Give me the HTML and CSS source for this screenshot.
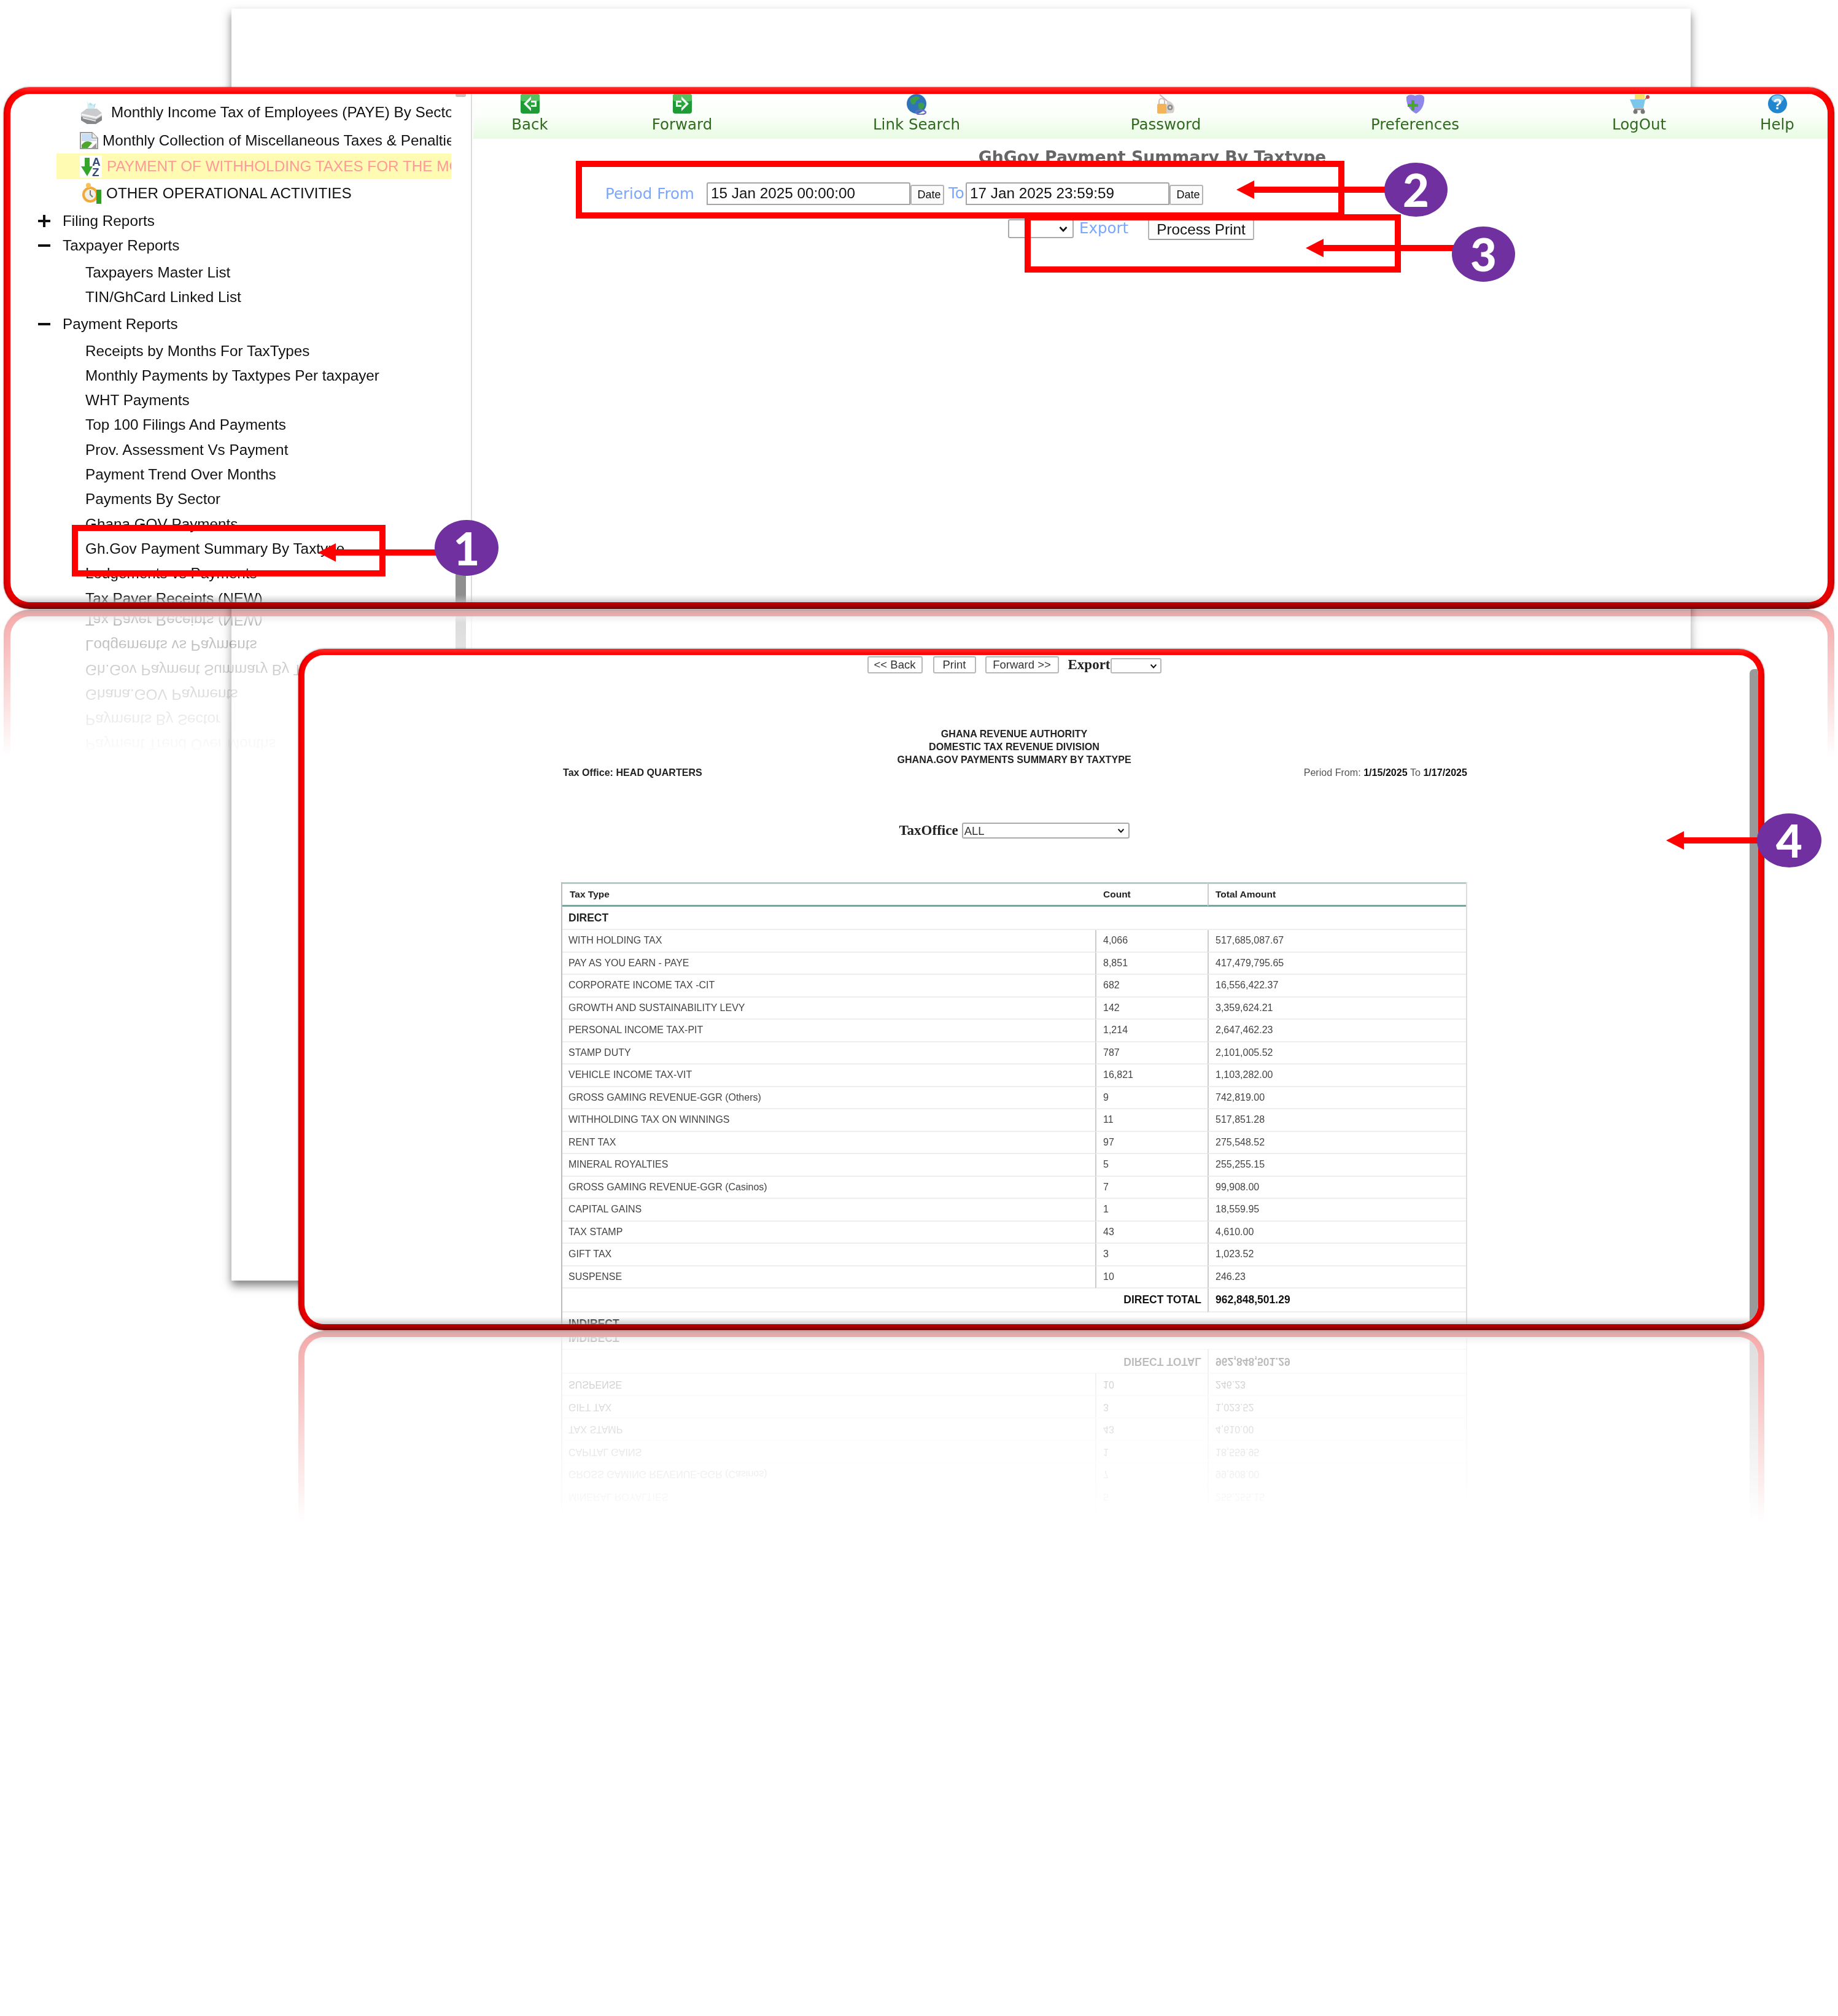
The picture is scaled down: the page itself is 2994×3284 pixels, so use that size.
FILE: index.html
```html
<!DOCTYPE html>
<html lang="en">
<head>
<meta charset="utf-8">
<title>Gh.Gov Payment Summary By Taxtype</title>
<link rel="stylesheet" href="styles.css">
</head>
<body>
<div class="stage">
  <div class="back-page"></div>

  <section class="frame frame-top">
    <div class="frame-inner app">
      <aside class="sidebar">
        <div class="tree">
          <div class="leaf leaf-a"><svg class="ic ic-printer" viewBox="0 0 38 40"><path d="M11 1l4 11 9 1 2-8-4 3-5-4-3 3z" fill="#b5dfec"/><path d="M13 16l-1-13 5 6 5-1 3 9z" fill="#d2edf4"/><path d="M2 21l9-7h17l8 7v12l-10 6H12L2 33z" fill="#c9cbcd"/><path d="M3 22l24 5 9-6v3l-9 6L3 25z" fill="#f4f4f4"/><path d="M2 27l24 5 10-6v7l-10 6H12L2 33z" fill="#85888b"/><path d="M5 29l21 5" stroke="#e8e8e8" stroke-width="2"/></svg><span class="leaf-t t-a">Monthly Income Tax of Employees (PAYE) By Sector</span></div>
          <div class="leaf leaf-b"><svg class="ic ic-doc" viewBox="0 0 30 28"><path d="M1 1h19l9 9v17H1z" fill="#fff" stroke="#9a9a9a" stroke-width="2"/><path d="M20 1v9h9" fill="#eee" stroke="#9a9a9a" stroke-width="1.5"/><path d="M3 3h16v9h8v3H3z" fill="#c9def5"/><path d="M3 26v-5c5-7 12-7 17-3l-7 8z" fill="#4fa52e"/><path d="M19 26l8-8v8z" fill="#9a9a9a"/></svg><span class="leaf-t t-b">Monthly Collection of Miscellaneous Taxes &amp; Penalties</span></div>
          <div class="leaf leaf-c"><svg class="ic ic-sort" viewBox="0 0 36 36"><rect width="36" height="36" fill="#fff"/><path d="M8 4h8v14h5L12 34 2 18h6z" fill="#35a52d"/><text x="20" y="17" class="ic-txt ic-a">A</text><text x="20" y="34" class="ic-txt ic-a">Z</text></svg><span class="leaf-t t-c">PAYMENT OF WITHHOLDING TAXES FOR THE MONTH</span></div>
          <div class="leaf leaf-d"><svg class="ic ic-clock" viewBox="0 0 33 35"><circle cx="14" cy="20" r="13" fill="#f2a93a"/><circle cx="14" cy="20" r="9" fill="#efefe8"/><path d="M14 13v7l4 4" stroke="#777" stroke-width="2" fill="none"/><circle cx="11" cy="5" r="4" fill="#f6c15a"/><path d="M24 12h8v23h-8z" fill="#2f9f26"/></svg><span class="leaf-t t-d">OTHER OPERATIONAL ACTIVITIES</span></div>
          <div class="node node-first"><span class="plus"></span>Filing Reports</div>
          <div class="node"><span class="minus"></span>Taxpayer Reports</div>
          <div class="sub-list">
            <div class="sub">Taxpayers Master List</div>
            <div class="sub">TIN/GhCard Linked List</div>
          </div>
          <div class="node"><span class="minus"></span>Payment Reports</div>
          <div class="sub-list">
            <div class="sub">Receipts by Months For TaxTypes</div>
            <div class="sub">Monthly Payments by Taxtypes Per taxpayer</div>
            <div class="sub">WHT Payments</div>
            <div class="sub">Top 100 Filings And Payments</div>
            <div class="sub">Prov. Assessment Vs Payment</div>
            <div class="sub">Payment Trend Over Months</div>
            <div class="sub">Payments By Sector</div>
            <div class="sub">Ghana.GOV Payments</div>
            <div class="sub">Gh.Gov Payment Summary By Taxtype</div>
            <div class="sub">Lodgements vs Payments</div>
            <div class="sub">Tax Payer Receipts (NEW)</div>
          </div>
        </div>
        <div class="side-cap"></div>
        <div class="side-thumb"></div>
      </aside>
      <main class="workspace">
        <nav class="toolbar">
          <div class="tool"><svg class="tool-ic" viewBox="0 0 33 33"><rect x="1" y="0" width="31" height="32" rx="4" fill="#1f9a36"/><rect x="1" y="0" width="31" height="12" rx="4" fill="#55c060"/><path d="M18 4L6 16l12 12v-7h9v-10h-9z" fill="#fff" opacity=".92"/><path d="M18 9l-7 7 7 7v-5h6v-4h-6z" fill="#2aa53c"/></svg><span>Back</span></div>
          <div class="tool"><svg class="tool-ic" viewBox="0 0 33 33"><rect x="1" y="0" width="31" height="32" rx="4" fill="#1f9a36"/><rect x="1" y="0" width="31" height="12" rx="4" fill="#55c060"/><path d="M15 4l12 12-12 12v-7H6v-10h9z" fill="#fff" opacity=".92"/><path d="M15 9l7 7-7 7v-5H9v-4h6z" fill="#2aa53c"/></svg><span>Forward</span></div>
          <div class="tool"><svg class="tool-ic tool-wide" viewBox="0 0 36 34"><circle cx="18" cy="16" r="16" fill="#2f74b8"/><path d="M8 8c5-5 12-5 15-2-1 4-5 3-6 7s-5 6-7 3-3-5-2-8zM22 15c4-2 8 0 9 3-1 5-5 8-8 8-2-3-3-8-1-11z" fill="#3f9e4a"/><ellipse cx="25" cy="30" rx="8" ry="3.500" fill="none" stroke="#6a6fc0" stroke-width="2.500"/></svg><span>Link Search</span></div>
          <div class="tool"><svg class="tool-ic" viewBox="0 0 33 33"><path d="M6 1l14 12" stroke="#d9a9b4" stroke-width="2"/><path d="M18 11c10 1 15 12 10 20l-12 1z" fill="#d6d0cb"/><circle cx="23" cy="22" r="4.500" fill="#8b8b8b"/><circle cx="23" cy="22" r="2" fill="#ddd"/><rect x="2" y="16" width="15" height="16" rx="2" fill="#f3b356"/><path d="M5 16v-4a4.500 4.500 0 0 1 9 0v4" fill="none" stroke="#c9c2bc" stroke-width="2"/></svg><span>Password</span></div>
          <div class="tool"><svg class="tool-ic" viewBox="0 0 33 33"><path d="M2 5c4-5 10-4 14-2 5-2 11-3 15 2 1 12-4 22-13 27C8 28 1 17 2 5z" fill="#9087ea"/><path d="M10 10h5v6h6v5h-6v6h-5v-6H4v-5h6z" fill="#4ca52f"/></svg><span>Preferences</span></div>
          <div class="tool"><svg class="tool-ic" viewBox="0 0 33 33"><rect x="9" y="1" width="16" height="10" fill="#f7e36b"/><path d="M1 9h25l-3 14H7z" fill="#7cc6ec"/><path d="M26 9l3-4" stroke="#8a8a8a" stroke-width="2"/><circle cx="30" cy="5" r="3" fill="#c4404a"/><path d="M8 25h16" stroke="#8f8f8f" stroke-width="3"/><circle cx="10" cy="29" r="3.500" fill="#777"/><circle cx="22" cy="29" r="3.500" fill="#777"/></svg><span>LogOut</span></div>
          <div class="tool"><svg class="tool-ic" viewBox="0 0 33 33"><circle cx="16.500" cy="16" r="15.500" fill="#1f86cf"/><ellipse cx="16.500" cy="8" rx="10" ry="6" fill="#7cc8f0"/><text x="16.500" y="25" class="ic-txt ic-q">?</text></svg><span>Help</span></div>
        </nav>
        <h1 class="form-title">GhGov Payment Summary By Taxtype</h1>
        <form class="period-row">
          <label class="period-label">Period From</label>
          <input class="date-input" type="text" value="15 Jan 2025 00:00:00">
          <button class="date-btn" type="button">Date</button>
          <span class="to-label">To</span>
          <input class="date-input" type="text" value="17 Jan 2025 23:59:59">
          <button class="date-btn" type="button">Date</button>
        </form>
        <div class="export-row">
          <select class="export-select"><option></option></select>
          <span class="export-label">Export</span>
          <button class="process-btn" type="button">Process Print</button>
        </div>
      </main>
    </div>
  </section>

  <section class="frame frame-report">
    <div class="frame-inner report-view">
      <div class="report">
        <div class="report-nav">
          <button class="nav-btn btn-back" type="button">&lt;&lt; Back</button>
          <button class="nav-btn btn-print" type="button">Print</button>
          <button class="nav-btn btn-forward" type="button">Forward &gt;&gt;</button>
          <span class="nav-export">Export</span>
          <select class="nav-select"><option></option></select>
        </div>
        <div class="report-head">
          <div>GHANA REVENUE AUTHORITY</div>
          <div>DOMESTIC TAX REVENUE DIVISION</div>
          <div>GHANA.GOV PAYMENTS SUMMARY BY TAXTYPE</div>
        </div>
        <div class="report-meta">
          <span class="meta-office">Tax Office: HEAD QUARTERS</span>
          <span class="meta-period">Period From: <b>1/15/2025</b> To <b>1/17/2025</b></span>
        </div>
        <div class="office-filter">
          <span class="office-label">TaxOffice</span>
          <select class="office-select"><option>ALL</option></select>
        </div>
        <table class="tax-table">
          <colgroup><col class="col-a"><col class="col-b"><col class="col-c"></colgroup>
          <thead>
            <tr><th>Tax Type</th><th>Count</th><th class="th-amount">Total Amount</th></tr>
          </thead>
          <tbody>
            <tr class="section"><td colspan="3">DIRECT</td></tr>
            <tr><td>WITH HOLDING TAX</td><td>4,066</td><td>517,685,087.67</td></tr>
            <tr><td>PAY AS YOU EARN - PAYE</td><td>8,851</td><td>417,479,795.65</td></tr>
            <tr><td>CORPORATE INCOME TAX -CIT</td><td>682</td><td>16,556,422.37</td></tr>
            <tr><td>GROWTH AND SUSTAINABILITY LEVY</td><td>142</td><td>3,359,624.21</td></tr>
            <tr><td>PERSONAL INCOME TAX-PIT</td><td>1,214</td><td>2,647,462.23</td></tr>
            <tr><td>STAMP DUTY</td><td>787</td><td>2,101,005.52</td></tr>
            <tr><td>VEHICLE INCOME TAX-VIT</td><td>16,821</td><td>1,103,282.00</td></tr>
            <tr><td>GROSS GAMING REVENUE-GGR (Others)</td><td>9</td><td>742,819.00</td></tr>
            <tr><td>WITHHOLDING TAX ON WINNINGS</td><td>11</td><td>517,851.28</td></tr>
            <tr><td>RENT TAX</td><td>97</td><td>275,548.52</td></tr>
            <tr><td>MINERAL ROYALTIES</td><td>5</td><td>255,255.15</td></tr>
            <tr><td>GROSS GAMING REVENUE-GGR (Casinos)</td><td>7</td><td>99,908.00</td></tr>
            <tr><td>CAPITAL GAINS</td><td>1</td><td>18,559.95</td></tr>
            <tr><td>TAX STAMP</td><td>43</td><td>4,610.00</td></tr>
            <tr><td>GIFT TAX</td><td>3</td><td>1,023.52</td></tr>
            <tr><td>SUSPENSE</td><td>10</td><td>246.23</td></tr>
            <tr class="total"><td colspan="2">DIRECT TOTAL</td><td>962,848,501.29</td></tr>
            <tr class="section"><td colspan="3">INDIRECT</td></tr>
          </tbody>
        </table>
      </div>
      <div class="report-thumb"></div>
    </div>
  </section>

  <div class="callout callout-1"></div>
  <div class="callout callout-2"></div>
  <div class="callout callout-3"></div>
  <div class="arrow arrow-1"></div>
  <div class="arrow arrow-2"></div>
  <div class="arrow arrow-3"></div>
  <div class="arrow arrow-4"></div>
  <div class="badge badge-1">1</div>
  <div class="badge badge-2">2</div>
  <div class="badge badge-3">3</div>
  <div class="badge badge-4">4</div>
</div>
</body>
</html>
```

FILE: styles.css
```css
* { box-sizing: border-box; }
html, body { margin: 0; padding: 0; background: #fff; }
body { font-family: "Liberation Sans", Arial, sans-serif; color: #111; }

.stage { position: relative; width: 2994px; height: 3284px; overflow: hidden; background: #fff; }

.back-page {
  position: absolute; left: 377px; top: 14px; width: 2377px; height: 2072px;
  background: #fff;
  box-shadow: 0 8px 14px rgba(0, 0, 0, .5);
}

/* red annotated frames with a mirrored reflection */
.frame {
  position: absolute;
  padding: 11px;
  border-radius: 42px;
  background: linear-gradient(to bottom, #ff3030 0, #ff0000 9px, #f40000 50%, #e80000 calc(100% - 12px), #c80000 calc(100% - 10px), #720000 100%);
  box-shadow: 0 0 3px rgba(0, 0, 0, .55), inset 4px 0 4px -2px rgba(90, 0, 0, .35), inset -4px 0 4px -2px rgba(90, 0, 0, .25);
  -webkit-box-reflect: below 1px linear-gradient(to bottom, transparent 72%, rgba(255, 255, 255, .34) 100%);
}
.frame-top { left: 6px; top: 142px; width: 2982px; height: 850px; }
.frame-report { left: 486px; top: 1057px; width: 2388px; height: 1110px; padding: 10px; }

.frame-inner {
  position: relative; width: 100%; height: 100%;
  background: #fff; border-radius: 32px; overflow: hidden;
}
.frame-inner::after {
  content: ""; position: absolute; left: 0; right: 0; bottom: 0; height: 12px;
  background: linear-gradient(to bottom, rgba(200, 200, 200, 0), rgba(190, 190, 190, .75));
}

/* top frame: app */
.app { display: flex; filter: blur(.45px); }
.sidebar { position: relative; flex: 0 0 752px; border-right: 2px solid #dcdcdc; }
.tree { width: 718px; overflow: hidden; white-space: nowrap; font-size: 24.300px; color: #111; }
.leaf { display: flex; align-items: center; margin-left: 75px; padding-left: 38px; }
.leaf-a { height: 53px; padding-top: 7px; }
.leaf-b { height: 44px; padding-top: 1px; }
.leaf-c { height: 42px; background: #fffbb2; }
.leaf-d { height: 44px; padding-top: 1px; }
.leaf-t { display: block; }
.t-a { margin-left: 13px; }
.t-b { margin-left: 7px; }
.t-c { margin-left: 8px; }
.t-d { margin-left: 8px; }
.leaf-c .leaf-t { color: #ff9a9a; }
.ic { flex: none; display: block; }
.ic-printer { width: 38px; height: 40px; }
.ic-doc { width: 30px; height: 28px; }
.ic-sort { width: 36px; height: 36px; }
.ic-clock { width: 33px; height: 35px; margin-left: 3px; margin-right: -1px; }
.ic-txt { font-family: "Liberation Sans", sans-serif; font-weight: 700; }
.ic-a { font-size: 19px; fill: #334a78; }
.ic-q { font-size: 24px; fill: #fff; text-anchor: middle; }

.node { display: flex; align-items: center; height: 40px; padding-left: 45px; position: relative; }
.node-first { margin-top: 4px; }
.plus, .minus { position: relative; display: block; width: 20px; height: 4px; margin-right: 20px; background: #111; flex: none; }
.plus::after { content: ""; position: absolute; left: 8px; top: -8px; width: 4px; height: 20px; background: #111; }
.sub-list { margin: 4px 0 3px; }
.sub { height: 40.300px; line-height: 40.300px; padding-left: 122px; }

.side-cap { position: absolute; left: 725px; top: 0; width: 17px; height: 5px; background: #c4c4c4; border-radius: 0 0 3px 3px; }
.side-thumb { position: absolute; left: 725px; top: 747px; width: 17px; height: 82px; background: #8f8f8f; }

.workspace { flex: 1; min-width: 0; margin-left: 2px; }
.toolbar {
  display: grid; grid-template-columns: 184px 312px 452px 360px 452px 278px 172px;
  height: 73px; overflow: hidden;
  background: linear-gradient(to bottom, #fff 0, #fcfffb 45%, #e7fbe2 100%);
}
.tool { display: flex; flex-direction: column; align-items: center; font-family: "DejaVu Sans", sans-serif; font-size: 24.500px; color: #2f6a1e; line-height: 30px; }
.tool-ic { display: block; flex: none; width: 33px; height: 33px; margin-bottom: 2px; }
.tool-wide { width: 36px; height: 34px; margin-bottom: 1px; }

.form-title {
  margin: 10px 0 21px; padding-left: 6px;
  text-align: center; font-family: "DejaVu Sans", sans-serif; font-size: 26.800px; font-weight: 700; line-height: 40px; color: #666;
}
.period-row { display: flex; align-items: flex-end; height: 37px; padding-left: 215px; }
.period-label, .to-label, .export-label { font-family: "DejaVu Sans", sans-serif; font-size: 24.500px; color: #7ba6ff; }
.period-label { width: 165px; line-height: 37px; white-space: nowrap; }
.to-label { width: 35px; padding-left: 7px; line-height: 35px; align-self: flex-start; }
.date-input {
  width: 332px; height: 37px; padding: 0 0 2px 5px; margin: 0;
  border: 2px solid #a5a5a5; border-radius: 3px 3px 0 0; background: #fff;
  font: 24.300px "Liberation Sans", sans-serif; color: #111;
}
.date-btn {
  width: 55px; height: 33px; padding: 0 0 0 6px; margin: 0; background: #fbfbfb;
  border: 2px solid #b4b4b4; border-radius: 3px; font: 18px "Liberation Sans", sans-serif; color: #111;
}
.export-row { display: flex; align-items: flex-start; margin: 23px 0 0 871px; }

/* selects share one hand-drawn chevron */
.export-select, .nav-select, .office-select {
  appearance: none; -webkit-appearance: none; background-color: #fff; background-repeat: no-repeat;
  background-image: url("data:image/svg+xml,%3Csvg xmlns='http://www.w3.org/2000/svg' viewBox='0 0 14 10'%3E%3Cpath d='M1.5 2L7 8l5.500-6' fill='none' stroke='%23111' stroke-width='2.600'/%3E%3C/svg%3E");
}
.export-select { width: 107px; height: 31px; border: 2px solid #a9a9a9; border-radius: 3px; background-size: 14px 10px; background-position: right 8px center; }
.export-label { margin-left: 9px; width: 112px; line-height: 30px; }
.process-btn {
  width: 173px; height: 34px; padding: 0; background: #fdfdfd; border: 2px solid #b5b5b5; border-bottom-color: #999;
  border-radius: 3px; font: 24.300px "Liberation Sans", sans-serif; color: #111;
}

/* report frame */
.report-view { filter: blur(.45px); }
.report { width: 1476px; margin-left: 418px; padding-top: 2px; }
.report-nav { display: flex; justify-content: center; align-items: flex-start; }
.nav-btn {
  height: 28px; padding: 0; background: #fff; border: 2px solid #b8b8b8; border-radius: 3px;
  font: 18.500px "Liberation Sans", sans-serif; color: #333;
}
.btn-back { width: 90px; }
.btn-print { width: 70px; margin-left: 17px; }
.btn-forward { width: 120px; margin-left: 15px; }
.nav-export { margin-left: 15px; font: 700 23px "Liberation Serif", serif; line-height: 28px; color: #222; }
.nav-select { width: 83px; height: 25px; margin: 3px 0 0 0; border: 2px solid #b8b8b8; border-radius: 3px; background-size: 12px 8px; background-position: right 5px center; }

.report-head { margin-top: 88px; text-align: center; font-size: 16.100px; font-weight: 700; line-height: 21px; color: #222; }
.report-meta { display: flex; justify-content: space-between; padding-left: 3px; font-size: 16.100px; line-height: 21px; color: #555; }
.meta-office { font-weight: 700; color: #222; }
.meta-period b { color: #111; }

.office-filter { display: flex; justify-content: center; align-items: center; margin-top: 71px; }
.office-label { font: 700 23px "Liberation Serif", serif; color: #222; }
.office-select { width: 273px; height: 26px; margin-left: 6px; padding: 0 2px; border: 2px solid #aaa; border-radius: 3px; font: 18.500px "Liberation Sans", sans-serif; color: #333; background-size: 12px 8px; background-position: right 6px center; }

.tax-table { width: 1476px; margin-top: 71px; table-layout: fixed; border-collapse: separate; border-spacing: 0; font-size: 16px; color: #444; border-right: 2px solid #ddd; border-left: 2px solid #bbb; }
.col-a { width: 868px; }
.col-b { width: 183px; }
.tax-table th {
  height: 40px; padding: 0 0 0 13px; text-align: left; font-size: 15.500px; font-weight: 700; color: #222;
  border-top: 3px solid #b2cdc9; border-bottom: 3px solid #7da3a0;
}
.tax-table th:first-child { padding-left: 12px; }
.tax-table .th-amount { padding-left: 11px; border-left: 2px solid #ccc; }
.tax-table td { height: 36.500px; padding: 0 0 0 11px; border-bottom: 2px solid #eee; border-left: 2px solid #ccc; white-space: nowrap; }
.tax-table td:first-child { border-left: 0; padding-left: 10px; }
.tax-table .section td { height: 38px; font-size: 17.500px; font-weight: 700; color: #222; }
.tax-table .total td { height: 39px; font-size: 17.500px; font-weight: 700; color: #111; }
.tax-table .total td:first-child { text-align: right; padding-right: 10px; }

.report-thumb { position: absolute; right: 0; top: 23px; bottom: 0; width: 14px; background: #999; border-radius: 7px 0 0 0; }

/* annotations */
.callout { position: absolute; border: 10px solid #f00; }
.callout-1 { left: 117px; top: 855px; width: 511px; height: 84px; }
.callout-2 { left: 938px; top: 262px; width: 1252px; height: 94px; }
.callout-3 { left: 1669px; top: 349px; width: 613px; height: 95px; }

.arrow {
  position: absolute; height: 30px; background: #f00;
  clip-path: polygon(0 50%, 29px 0, 29px 10px, 100% 10px, 100% 20px, 29px 20px, 29px 100%);
}
.arrow-1 { left: 518px; top: 885px; width: 195px; }
.arrow-2 { left: 2014px; top: 294px; width: 250px; }
.arrow-3 { left: 2127px; top: 389px; width: 250px; }
.arrow-4 { left: 2714px; top: 1354px; width: 155px; }

.badge {
  position: absolute; display: flex; align-items: center; justify-content: center;
  border-radius: 50%; background: #7030a0; color: #fff;
  font-family: Lato, "Open Sans", sans-serif; font-weight: 900; font-size: 74px; line-height: 1;
}
.badge-1 { left: 708px; top: 847px; width: 104px; height: 91px; }
.badge-2 { left: 2255px; top: 265px; width: 103px; height: 88px; }
.badge-3 { left: 2365px; top: 369px; width: 103px; height: 90px; }
.badge-4 { left: 2862px; top: 1325px; width: 105px; height: 88px; }
```
